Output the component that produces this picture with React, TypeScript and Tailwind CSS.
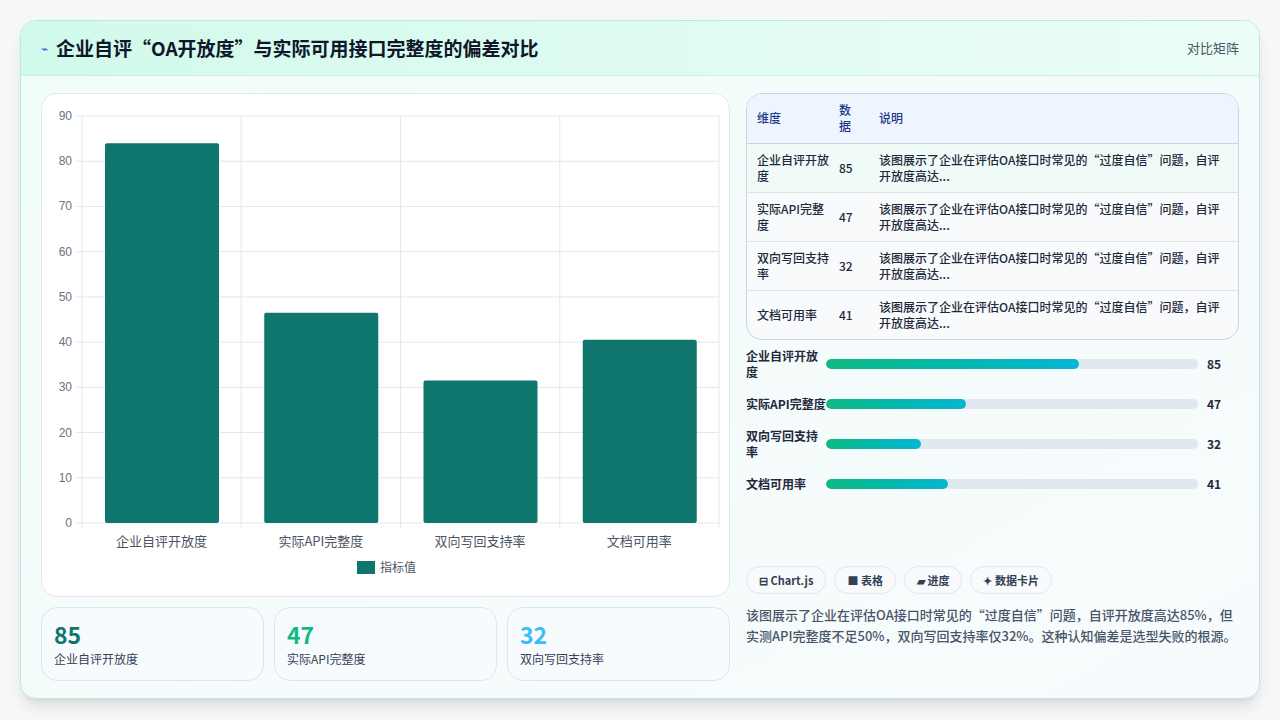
import React from 'react';

const rows = [
  { name: '企业自评开放度', value: 85 },
  { name: '实际API完整度', value: 47 },
  { name: '双向写回支持率', value: 32 },
  { name: '文档可用率', value: 41 },
];

const desc = '该图展示了企业在评估OA接口时常见的“过度自信”问题，自评开放度高达...';

const Chart: React.FC = () => {
  // plot area in card coords
  const x0 = 40, x1 = 677, y0 = 22, y1 = 429;
  const unit = (y1 - y0) / 90;
  const band = (x1 - x0) / 4;
  const bars = [84, 46.5, 31.5, 40.5];
  return (
    <svg width="689" height="503" className="block">
      {[0, 10, 20, 30, 40, 50, 60, 70, 80, 90].map(t => {
        const y = y1 - t * unit;
        return (
          <g key={t}>
            <line x1={x0 - 6} x2={x1} y1={y} y2={y} stroke="#e5e7eb" />
            <text x={x0 - 10} y={y + 4} textAnchor="end" fontSize="12" fill="#6b7280" fontFamily="Liberation Sans, sans-serif">{t}</text>
          </g>
        );
      })}
      {[0, 1, 2, 3, 4].map(i => (
        <line key={i} x1={x0 + i * band} x2={x0 + i * band} y1={y0} y2={y1 + 6} stroke="#e5e7eb" />
      ))}
      {bars.map((v, i) => (
        <rect key={i} x={x0 + i * band + 23} y={y1 - v * unit} width={114} height={v * unit} fill="#0f766e" rx="2" />
      ))}
      {rows.map((r, i) => (
        <text key={i} x={x0 + i * band + band / 2} y={y1 + 23} textAnchor="middle" fontSize="13" fill="#4b5563" fontFamily="Noto Sans CJK SC, sans-serif">{r.name}</text>
      ))}
      <rect x="315" y="467" width="18" height="13" fill="#0f766e" />
      <text x="338" y="478" fontSize="12" fill="#4b5563" fontFamily="Noto Sans CJK SC, sans-serif">指标值</text>
    </svg>
  );
};

export default function App() {
  return (
    <div className="w-[1280px] h-[720px] bg-[#f5f7f8] p-5" style={{ fontFamily: '"Noto Sans CJK SC", "Noto Sans", sans-serif' }}>
      <div className="h-[679px] rounded-2xl border border-[#b7ebe0] bg-gradient-to-br from-[#f0fdf8] to-[#f8fbfd] shadow-lg overflow-hidden flex flex-col">
        <div className="h-[55px] flex items-center justify-between px-5 bg-gradient-to-r from-[#d1faeb] to-[#ecfdf7] border-b border-[#cdeee6]">
          <div className="flex items-center gap-2">
            <span className="text-[#2563eb] text-xs">⌁</span>
            <h1 className="text-[19px] font-bold text-[#0f172a]">企业自评“OA开放度”与实际可用接口完整度的偏差对比</h1>
          </div>
          <span className="text-[13px] text-[#4b5563]">对比矩阵</span>
        </div>
        <div className="flex gap-4 px-5 pt-[17px]">
          <div className="w-[689px] flex flex-col gap-[10px]">
            <div className="h-[504px] bg-white rounded-2xl border border-[#e2e8f0]">
              <Chart />
            </div>
            <div className="grid grid-cols-3 gap-[10px]">
              {[
                { v: '85', l: '企业自评开放度', c: 'text-[#0f766e]' },
                { v: '47', l: '实际API完整度', c: 'text-[#10b981]' },
                { v: '32', l: '双向写回支持率', c: 'text-[#38bdf8]' },
              ].map(s => (
                <div key={s.v} className="h-[74px] rounded-2xl border border-[#dbe7ef] bg-[#f8fbfe] px-3 pt-[12px]">
                  <div className={`text-[23px] font-bold leading-7 ${s.c}`}>{s.v}</div>
                  <div className="text-[12px] text-[#334155] mt-[2px]">{s.l}</div>
                </div>
              ))}
            </div>
          </div>
          <div className="w-[496px] flex flex-col">
            <div className="rounded-2xl border border-[#cbd5e1] overflow-hidden bg-[#f8fafc]">
              <table className="w-full text-[12px] text-[#1e293b]">
                <thead className="bg-[#eef5ff] text-[#1e3a8a]">
                  <tr className="h-[49px] border-b border-[#cbd5e1]">
                    <th className="text-left font-medium pl-[10px] w-[92px]">维度</th>
                    <th className="text-left font-medium w-[40px] leading-4">数<br />据</th>
                    <th className="text-left font-medium">说明</th>
                  </tr>
                </thead>
                <tbody>
                  {rows.map((r, i) => (
                    <tr key={r.name} className={`h-[49px] ${i < 3 ? 'border-b border-[#dde3ea]' : ''} ${i === 0 ? 'bg-[#f0fbf7]' : ''}`}>
                      <td className="pl-[10px] pr-2 font-medium leading-4">{r.name}</td>
                      <td className="font-medium">{r.value}</td>
                      <td className="pr-[10px] font-medium leading-4">{desc}</td>
                    </tr>
                  ))}
                </tbody>
              </table>
            </div>
            <div className="flex flex-col gap-[12px] mt-[10px]">
              {rows.map(r => (
                <div key={r.name} className="flex items-center h-[28px]">
                  <div className="w-[80px] text-[12px] font-semibold text-[#1e293b] leading-4">{r.name}</div>
                  <div className="w-[372px] h-[10px] rounded-full bg-[#e2e8f0] overflow-hidden">
                    <div className="h-full rounded-full bg-gradient-to-r from-[#10b981] to-[#06b6d4]" style={{ width: `${r.value * 0.8}%` }} />
                  </div>
                  <div className="ml-[9px] text-[12px] font-bold text-[#1e293b]">{r.value}</div>
                </div>
              ))}
            </div>
            <div className="mt-[68px] flex gap-2">
              {['⊟ Chart.js', '■ 表格', '▰ 进度', '✦ 数据卡片'].map(t => (
                <span key={t} className="px-3 h-[28px] flex items-center rounded-full border border-[#e2e8f0] bg-[#f8fafc] text-[11px] font-semibold text-[#334155]">{t}</span>
              ))}
            </div>
            <p className="mt-[10px] text-[13px] leading-[21px] font-medium text-[#475569]">该图展示了企业在评估OA接口时常见的“过度自信”问题，自评开放度高达85%，但实测API完整度不足50%，双向写回支持率仅32%。这种认知偏差是选型失败的根源。</p>
          </div>
        </div>
      </div>
    </div>
  );
}
